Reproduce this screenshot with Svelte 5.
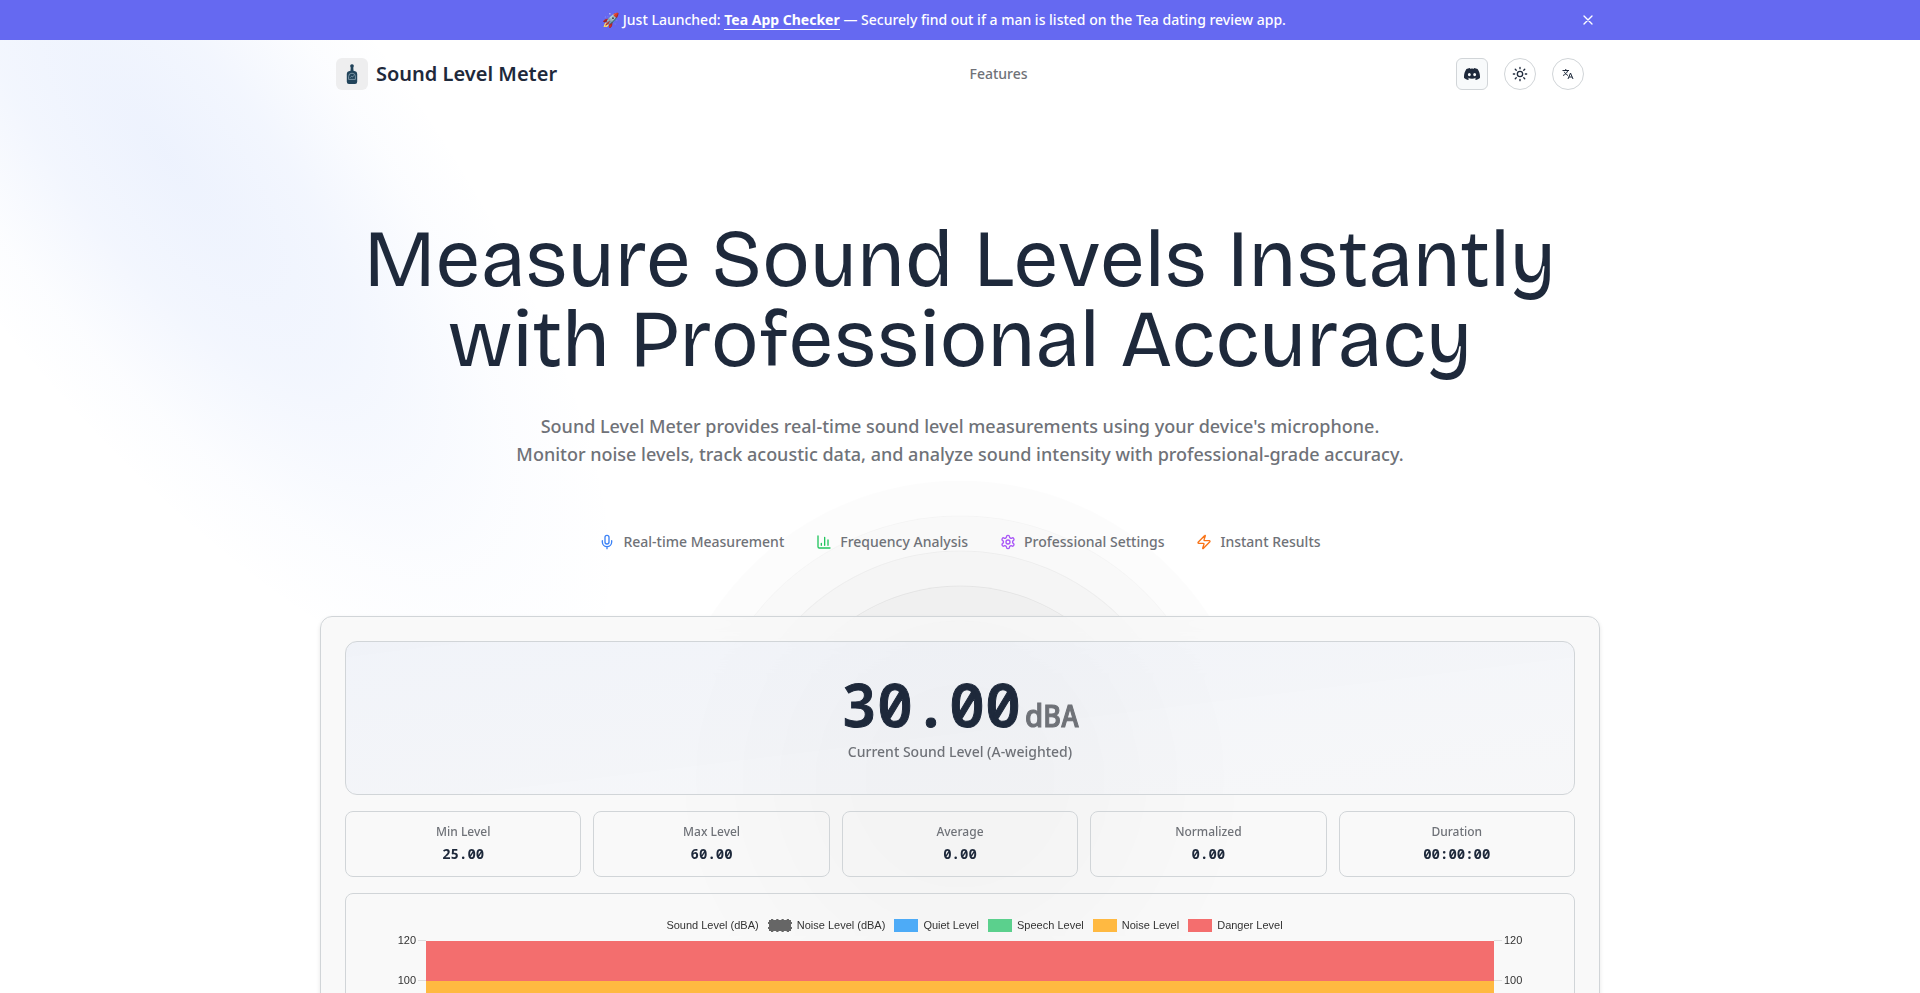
<script lang="ts">
  const features = [
    { label: 'Real-time Measurement', icon: 'mic', color: '#3b82f6' },
    { label: 'Frequency Analysis', icon: 'chart', color: '#22c55e' },
    { label: 'Professional Settings', icon: 'settings', color: '#a855f7' },
    { label: 'Instant Results', icon: 'zap', color: '#f97316' }
  ];

  const stats = [
    { label: 'Min Level', value: '25.00' },
    { label: 'Max Level', value: '60.00' },
    { label: 'Average', value: '0.00' },
    { label: 'Normalized', value: '0.00' },
    { label: 'Duration', value: '00:00:00' }
  ];

  const legend = [
    { label: 'Sound Level (dBA)', color: 'transparent' },
    { label: 'Noise Level (dBA)', color: '#666666', dashed: true },
    { label: 'Quiet Level', color: '#4dabf7' },
    { label: 'Speech Level', color: '#5bd08d' },
    { label: 'Noise Level', color: '#ffb941' },
    { label: 'Danger Level', color: '#f46e6e' }
  ];

  // top of each band, from loud to quiet
  const bands = [
    { top: 120, color: '#f36e6e' },
    { top: 100, color: '#ffb941' },
    { top: 80, color: '#ffb941' },
    { top: 60, color: '#5bd08d' },
    { top: 40, color: '#4dabf7' },
    { top: 20, color: '#4dabf7' }
  ];

  // rings get stronger towards the centre
  const ripples = [
    { size: 595, fill: 0.01, line: 0 },
    { size: 525, fill: 0.013, line: 0.025 },
    { size: 455, fill: 0.016, line: 0.035 },
    { size: 385, fill: 0.019, line: 0.05 },
    { size: 315, fill: 0.02, line: 0.05 },
    { size: 245, fill: 0.02, line: 0.05 }
  ];

  let bannerOpen = $state(true);
  let level = $state(30);
</script>

<div class="page">
  <div class="spotlight" aria-hidden="true"></div>

  {#if bannerOpen}
    <div class="banner">
      <div class="banner-inner">
        <p>
          🚀 Just Launched: <a href="#tea">Tea App Checker</a> — Securely find out if a man is listed on the Tea dating review app.
        </p>
        <button class="close" aria-label="Dismiss" onclick={() => (bannerOpen = false)}>
          <svg viewBox="0 0 24 24" fill="none" stroke="currentColor" stroke-width="2" stroke-linecap="round">
            <path d="M18 6 6 18M6 6l12 12" />
          </svg>
        </button>
      </div>
    </div>
  {/if}

  <header>
    <a class="brand" href="#home">
      <span class="logo">
        <svg viewBox="0 0 32 32">
          <path d="M14.2 7.5a1.9 1.9 0 0 1 3.6 0c.2.8-.4 1.500-.5 2.200l.2 3c2.500.4 3.700 1.500 3.700 3.300v7.800a2.200 2.200 0 0 1-2.200 2.200h-6a2.200 2.200 0 0 1-2.200-2.200V16c0-1.800 1.200-2.900 3.700-3.300l.2-3c-.1-.7-.7-1.400-.5-2.200z" fill="#21435a" />
          <path d="M12.600 21.400v-2.800a3.400 3.400 0 0 1 6.800 0v2.800z" fill="none" stroke="#9fb4c1" stroke-width="0.7" />
          <path d="M14.300 19.600l1.300-1.300.9.700 1.300-1.600" fill="none" stroke="#9fb4c1" stroke-width="0.7" />
        </svg>
      </span>
      <span class="brand-name">Sound Level Meter</span>
    </a>
    <nav><a href="#features">Features</a></nav>
    <div class="actions">
      <a class="action square" href="#discord" aria-label="Discord">
        <svg viewBox="0 0 24 24" fill="currentColor">
          <path d="M20.317 4.37a19.79 19.79 0 0 0-4.885-1.515.074.074 0 0 0-.079.037c-.21.375-.444.864-.608 1.25a18.27 18.27 0 0 0-5.487 0 12.64 12.64 0 0 0-.617-1.25.077.077 0 0 0-.079-.037A19.74 19.74 0 0 0 3.677 4.37a.07.07 0 0 0-.032.027C.533 9.046-.32 13.58.099 18.057a.082.082 0 0 0 .031.057 19.9 19.9 0 0 0 5.993 3.03.078.078 0 0 0 .084-.028c.462-.63.874-1.295 1.226-1.994a.076.076 0 0 0-.041-.106 13.1 13.1 0 0 1-1.872-.892.077.077 0 0 1-.008-.128c.126-.094.252-.192.372-.291a.074.074 0 0 1 .077-.01c3.928 1.793 8.18 1.793 12.062 0a.074.074 0 0 1 .078.009c.12.099.246.198.373.292a.077.077 0 0 1-.006.127 12.3 12.3 0 0 1-1.873.892.077.077 0 0 0-.041.107c.36.698.772 1.362 1.225 1.993a.076.076 0 0 0 .084.028 19.84 19.84 0 0 0 6.002-3.03.077.077 0 0 0 .032-.054c.5-5.177-.838-9.674-3.549-13.66a.061.061 0 0 0-.031-.03zM8.02 15.33c-1.183 0-2.157-1.085-2.157-2.419 0-1.333.956-2.419 2.157-2.419 1.21 0 2.176 1.096 2.157 2.42 0 1.333-.956 2.418-2.157 2.418zm7.975 0c-1.183 0-2.157-1.085-2.157-2.419 0-1.333.955-2.419 2.157-2.419 1.21 0 2.176 1.096 2.157 2.42 0 1.333-.946 2.418-2.157 2.418z" />
        </svg>
      </a>
      <button class="action" aria-label="Toggle theme">
        <svg viewBox="0 0 24 24" fill="none" stroke="currentColor" stroke-width="2" stroke-linecap="round">
          <circle cx="12" cy="12" r="4" />
          <path d="M12 2v2M12 20v2M4.93 4.93l1.41 1.41M17.66 17.66l1.41 1.41M2 12h2M20 12h2M6.34 17.66l-1.41 1.41M19.07 4.93l-1.41 1.41" />
        </svg>
      </button>
      <button class="action" aria-label="Language">
        <svg class="small" viewBox="0 0 24 24" fill="none" stroke="currentColor" stroke-width="2">
          <path d="M1 5h13M7.500 2v3M11.500 5c-1 4-4.500 8-9.500 10M4.500 7.500c1.500 3.500 4 5.500 7.500 7.500M12 22l5-12 5 12M13.800 18h6.400" />
        </svg>
      </button>
    </div>
  </header>

  <main>
    <h1>Measure Sound Levels Instantly<br />with Professional Accuracy</h1>
    <p class="lead">
      Sound Level Meter provides real-time sound level measurements using your device's microphone.<br />
      Monitor noise levels, track acoustic data, and analyze sound intensity with professional-grade accuracy.
    </p>

    <ul class="features" id="features">
      {#each features as feature}
        <li>
          <svg viewBox="0 0 24 24" fill="none" stroke={feature.color} stroke-width="2" stroke-linecap="round" stroke-linejoin="round">
            {#if feature.icon === 'mic'}
              <path d="M12 2a3 3 0 0 0-3 3v7a3 3 0 0 0 6 0V5a3 3 0 0 0-3-3Z" />
              <path d="M19 10v2a7 7 0 0 1-14 0v-2M12 19v3" />
            {:else if feature.icon === 'chart'}
              <path d="M3 3v16a2 2 0 0 0 2 2h16M18 17V9M13 17V5M8 17v-3" />
            {:else if feature.icon === 'settings'}
              <path d="M12.22 2h-.44a2 2 0 0 0-2 2v.18a2 2 0 0 1-1 1.73l-.43.25a2 2 0 0 1-2 0l-.15-.08a2 2 0 0 0-2.73.73l-.22.38a2 2 0 0 0 .73 2.73l.15.1a2 2 0 0 1 1 1.72v.51a2 2 0 0 1-1 1.74l-.15.09a2 2 0 0 0-.73 2.73l.22.38a2 2 0 0 0 2.73.73l.15-.08a2 2 0 0 1 2 0l.43.25a2 2 0 0 1 1 1.73V20a2 2 0 0 0 2 2h.44a2 2 0 0 0 2-2v-.18a2 2 0 0 1 1-1.73l.43-.25a2 2 0 0 1 2 0l.15.08a2 2 0 0 0 2.73-.73l.22-.39a2 2 0 0 0-.73-2.73l-.15-.08a2 2 0 0 1-1-1.74v-.5a2 2 0 0 1 1-1.74l.15-.09a2 2 0 0 0 .73-2.73l-.22-.38a2 2 0 0 0-2.73-.73l-.15.08a2 2 0 0 1-2 0l-.43-.25a2 2 0 0 1-1-1.73V4a2 2 0 0 0-2-2z" />
              <circle cx="12" cy="12" r="3" />
            {:else}
              <path d="M4 14a1 1 0 0 1-.78-1.63l9.9-10.2a.5.5 0 0 1 .86.46l-1.92 6.02A1 1 0 0 0 13 10h7a1 1 0 0 1 .78 1.63l-9.9 10.2a.5.5 0 0 1-.86-.46l1.92-6.02A1 1 0 0 0 11 14z" />
            {/if}
          </svg>
          {feature.label}
        </li>
      {/each}
    </ul>

    <section class="meter">
      <div class="ripple" aria-hidden="true">
        {#each ripples as ring}
          <span
            style="width: {ring.size}px; height: {ring.size}px; background: rgba(0, 0, 0, {ring.fill}); border-color: rgba(0, 0, 0, {ring.line})"
          ></span>
        {/each}
      </div>

      <div class="card">
        <div class="reading">
          <div class="value">{level.toFixed(2)}<span class="unit">dBA</span></div>
          <div class="caption">Current Sound Level (A-weighted)</div>
        </div>

        <dl class="stats">
          {#each stats as stat}
            <div class="stat">
              <dt>{stat.label}</dt>
              <dd>{stat.value}</dd>
            </div>
          {/each}
        </dl>

        <div class="chart">
          <ul class="legend">
            {#each legend as item}
              <li>
                <span class="swatch" class:dashed={item.dashed} style="background-color: {item.color}"></span>
                {item.label}
              </li>
            {/each}
          </ul>
          <div class="plot">
            {#each bands as band}
              <div class="row">
                <span class="tick left">{band.top}</span>
                <span class="band" style="background: {band.color}"></span>
                <span class="tick right">{band.top}</span>
              </div>
            {/each}
          </div>
        </div>
      </div>
    </section>
  </main>
</div>

<style>
  :global(body) {
    margin: 0;
    background: #fff;
  }

  .page {
    position: relative;
    min-height: 100vh;
    overflow: hidden;
    font-family: 'Noto Sans', sans-serif;
    font-size: 14px;
    font-weight: 500;
    line-height: 20px;
    color: #1e293b;
  }

  a {
    color: inherit;
    text-decoration: none;
  }

  button {
    padding: 0;
    border: 0;
    background: none;
    color: inherit;
    cursor: pointer;
  }

  ul,
  dl,
  dd {
    margin: 0;
    padding: 0;
    list-style: none;
  }

  /* soft diagonal light behind the hero */
  .spotlight {
    position: absolute;
    top: -350px;
    left: 0;
    width: 480px;
    height: 1200px;
    transform: rotate(-38deg);
    background: radial-gradient(
      50% 56% at 50% 40%,
      rgba(80, 130, 240, 0.1) 0,
      rgba(80, 130, 240, 0.07) 40%,
      rgba(80, 130, 240, 0.02) 75%,
      rgba(80, 130, 240, 0) 100%
    );
    pointer-events: none;
  }

  .banner {
    position: relative;
    background: #6569f1;
    color: #fff;
  }

  .banner-inner {
    display: flex;
    align-items: center;
    gap: 8px;
    max-width: 1280px;
    height: 40px;
    margin: 0 auto;
  }

  .banner p {
    flex: 1;
    margin: 0;
    text-align: center;
  }

  .banner a {
    font-weight: 700;
    border-bottom: 1px solid #fff;
  }

  .close {
    display: flex;
    align-items: center;
    justify-content: center;
    width: 24px;
    height: 24px;
  }

  .close svg {
    width: 16px;
    height: 16px;
  }

  header {
    position: relative;
    display: flex;
    align-items: center;
    justify-content: space-between;
    max-width: 1248px;
    height: 68px;
    margin: 0 auto;
  }

  .brand {
    display: flex;
    align-items: center;
    gap: 8px;
  }

  .logo {
    display: flex;
    width: 32px;
    height: 32px;
    border-radius: 6px;
    background: #eeeeef;
  }

  .brand-name {
    font-size: 20px;
    font-weight: 600;
    line-height: 28px;
  }

  nav {
    color: #6f7278;
  }

  .actions {
    display: flex;
    gap: 16px;
    padding-left: 16px;
  }

  .action {
    display: flex;
    align-items: center;
    justify-content: center;
    box-sizing: border-box;
    width: 32px;
    height: 32px;
    border: 1px solid #d1d5d8;
    border-radius: 50%;
    background: #fff;
  }

  .action.square {
    border-radius: 6px;
    background: #f8fafb;
  }

  .action svg {
    width: 16px;
    height: 16px;
  }

  .action svg.small {
    width: 12px;
    height: 12px;
  }

  main {
    position: relative;
    max-width: 1280px;
    margin: 0 auto;
    padding-top: 112px;
    text-align: center;
  }

  h1 {
    margin: 0;
    font-family: 'Bricolage Grotesque', 'Liberation Sans', sans-serif;
    font-size: 80px;
    font-weight: 400;
    line-height: 80px;
  }

  .lead {
    margin: 32px 0 0;
    font-size: 18px;
    line-height: 28px;
    color: #6f7278;
  }

  .features {
    position: relative;
    z-index: 1;
    display: flex;
    justify-content: center;
    gap: 32px;
    margin: 64px 0;
    color: #6f7278;
  }

  .features li {
    display: flex;
    align-items: center;
    gap: 8px;
  }

  .features svg {
    width: 16px;
    height: 16px;
  }

  .meter {
    position: relative;
  }

  .ripple {
    position: absolute;
    top: 162px;
    left: 50%;
  }

  .ripple span {
    position: absolute;
    box-sizing: border-box;
    transform: translate(-50%, -50%);
    border: 1px solid;
    border-radius: 50%;
  }

  .card {
    position: relative;
    display: flex;
    flex-direction: column;
    gap: 16px;
    padding: 24px;
    border: 1px solid #d1d5d8;
    border-radius: 12px;
    background: rgba(248, 248, 248, 0.8);
    backdrop-filter: blur(24px);
    box-shadow: 0 2px 4px rgba(0, 0, 0, 0.1);
  }

  .reading {
    padding: 32px;
    border: 1px solid #d1d5d8;
    border-radius: 12px;
    background: linear-gradient(to bottom right, rgba(80, 130, 240, 0.05), rgba(80, 130, 240, 0.01));
  }

  .value {
    font-family: 'Noto Sans Mono', 'DejaVu Sans Mono', monospace;
    font-size: 60px;
    font-weight: 600;
    line-height: 60px;
    -webkit-text-stroke: 1px currentColor;
  }

  .unit {
    margin-left: 4px;
    font-size: 30px;
    font-weight: 500;
    line-height: 30px;
    color: #6f7278;
  }

  .caption {
    margin-top: 8px;
    color: #6f7278;
  }

  .stats {
    display: grid;
    grid-template-columns: repeat(5, 1fr);
    gap: 12px;
  }

  .stat {
    padding: 12px;
    border: 1px solid #d1d5d8;
    border-radius: 8px;
  }

  dt {
    font-size: 12px;
    line-height: 16px;
    color: #6f7278;
  }

  dd {
    margin-top: 4px;
    font-family: 'Noto Sans Mono', 'DejaVu Sans Mono', monospace;
    font-weight: 700;
  }

  .chart {
    padding: 24px;
    border: 1px solid #d1d5d8;
    border-radius: 8px;
    font-family: 'Liberation Sans', Arial, sans-serif;
    font-size: 11px;
    font-weight: 400;
    line-height: 14px;
    color: #333;
  }

  .legend {
    display: flex;
    justify-content: center;
    gap: 9px;
  }

  .legend li {
    display: flex;
    align-items: center;
    gap: 5px;
  }

  .swatch {
    width: 24px;
    height: 13px;
  }

  .swatch.dashed {
    box-sizing: border-box;
    border: 1px dashed #f8f8f8;
  }

  .plot {
    margin-top: 9px;
  }

  .row {
    display: flex;
    align-items: flex-start;
    height: 40px;
  }

  .tick {
    display: flex;
    align-items: center;
    gap: 2px;
    width: 56px;
    margin-top: -8px;
  }

  .tick.left {
    justify-content: flex-end;
  }

  .tick.left::after,
  .tick.right::before {
    content: '';
    width: 8px;
    height: 1px;
    background: #ddd;
  }

  .band {
    flex: 1;
    align-self: stretch;
  }
</style>
